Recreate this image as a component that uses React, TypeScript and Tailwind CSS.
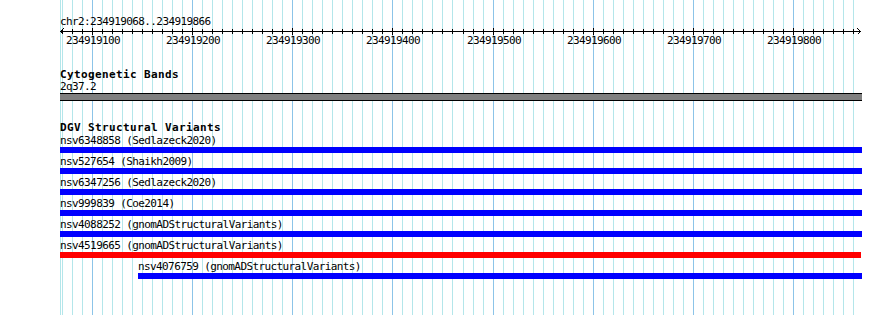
/*
 * Genome browser panel: ruler, cytogenetic band track, DGV structural variants.
 * 1 px per bp across 60..860, grid line every 10 bp.
 */

const START = 234919068;
const END = 234919866;
const LEFT = 60;
const WIDTH = 800;

const toX = (bp: number) => Math.round(LEFT + ((bp - START) * WIDTH) / (END - START + 1));

const gridBps: number[] = [];
for (let bp = 234919070; bp <= 234919860; bp += 10) gridBps.push(bp);

const variants = [
  { label: 'nsv6348858 (Sedlazeck2020)', color: 'bg-[#0000ff]', indent: false, short: false },
  { label: 'nsv527654 (Shaikh2009)', color: 'bg-[#0000ff]', indent: false, short: false },
  { label: 'nsv6347256 (Sedlazeck2020)', color: 'bg-[#0000ff]', indent: false, short: false },
  { label: 'nsv999839 (Coe2014)', color: 'bg-[#0000ff]', indent: false, short: false },
  { label: 'nsv4088252 (gnomADStructuralVariants)', color: 'bg-[#0000ff]', indent: false, short: false },
  { label: 'nsv4519665 (gnomADStructuralVariants)', color: 'bg-[#ff0000]', indent: false, short: true },
  { label: 'nsv4076759 (gnomADStructuralVariants)', color: 'bg-[#0000ff]', indent: true, short: false },
];

const mono = "font-['DejaVu_Sans_Mono',monospace]";

const Grid = () => (
  <svg className="absolute inset-0" width={890} height={315} shapeRendering="crispEdges">
    <line x1={60.5} y1={0} x2={60.5} y2={315} stroke="#b4e6ea" />
    {gridBps.map((bp) => {
      const x = toX(bp) + 0.5;
      const major = bp % 100 === 0;
      return <line key={bp} x1={x} y1={0} x2={x} y2={315} stroke={major ? '#8cc4e8' : '#b4e6ea'} />;
    })}
  </svg>
);

const Ruler = () => (
  <svg width={890} height={20} className="block" shapeRendering="crispEdges">
    <line x1={60} y1={4.5} x2={861} y2={4.5} stroke="#000" />
    <polyline points="63.5,1.5 60.5,4.5 63.5,7.5" fill="none" stroke="#000" />
    <polyline points="857.5,1.5 860.5,4.5 857.5,7.5" fill="none" stroke="#000" />
    {gridBps.map((bp) => {
      const x = toX(bp) + 0.5;
      const major = bp % 100 === 0;
      return <line key={bp} x1={x} y1={major ? 1 : 2} x2={x} y2={major ? 8 : 7} stroke="#000" />;
    })}
    {gridBps
      .filter((bp) => bp % 100 === 0)
      .map((bp) => (
        <text
          key={bp}
          x={toX(bp) + 1}
          y={17}
          textAnchor="middle"
          fontFamily="'DejaVu Sans Mono', monospace"
          fontSize={11}
          letterSpacing={-0.6}
          fill="#000"
        >
          {bp}
        </text>
      ))}
  </svg>
);

export default function App() {
  return (
    <div className="relative w-[890px] h-[315px] bg-white overflow-hidden">
      <Grid />
      <div className={`relative flex flex-col pt-[16px] ${mono} text-[11px] tracking-[-0.6px] text-black`}>
        <div className="ml-[60px] h-[11px] leading-[11px] whitespace-pre">chr2:234919068..234919866</div>
        <div className="mt-[0px]">
          <Ruler />
        </div>

        {/* Cytogenetic Bands */}
        <div className="ml-[60px] mt-[22px] h-[12px] leading-[11px] font-bold tracking-[0.38px] whitespace-pre">
          Cytogenetic Bands
        </div>
        <div className="ml-[60px] h-[11px] leading-[11px]">2q37.2</div>
        <div className="ml-[60px] mt-[1px] w-[802px] h-[8px] bg-[#808080] border-y border-black" />

        {/* DGV Structural Variants */}
        <div className="ml-[60px] mt-[21px] h-[12px] leading-[11px] font-bold tracking-[0.38px] whitespace-pre">
          DGV Structural Variants
        </div>
        <div className="mt-[1px] flex flex-col">
          {variants.map((v) => (
            <div key={v.label} className={`flex flex-col mb-[3px] ${v.indent ? 'ml-[138px]' : 'ml-[60px]'}`}>
              <div className="h-[12px] leading-[12px] whitespace-pre">{v.label}</div>
              <div
                className={`h-[6px] ${v.color} ${v.indent ? 'w-[724px]' : v.short ? 'w-[801px]' : 'w-[802px]'}`}
              />
            </div>
          ))}
        </div>
      </div>
    </div>
  );
}
